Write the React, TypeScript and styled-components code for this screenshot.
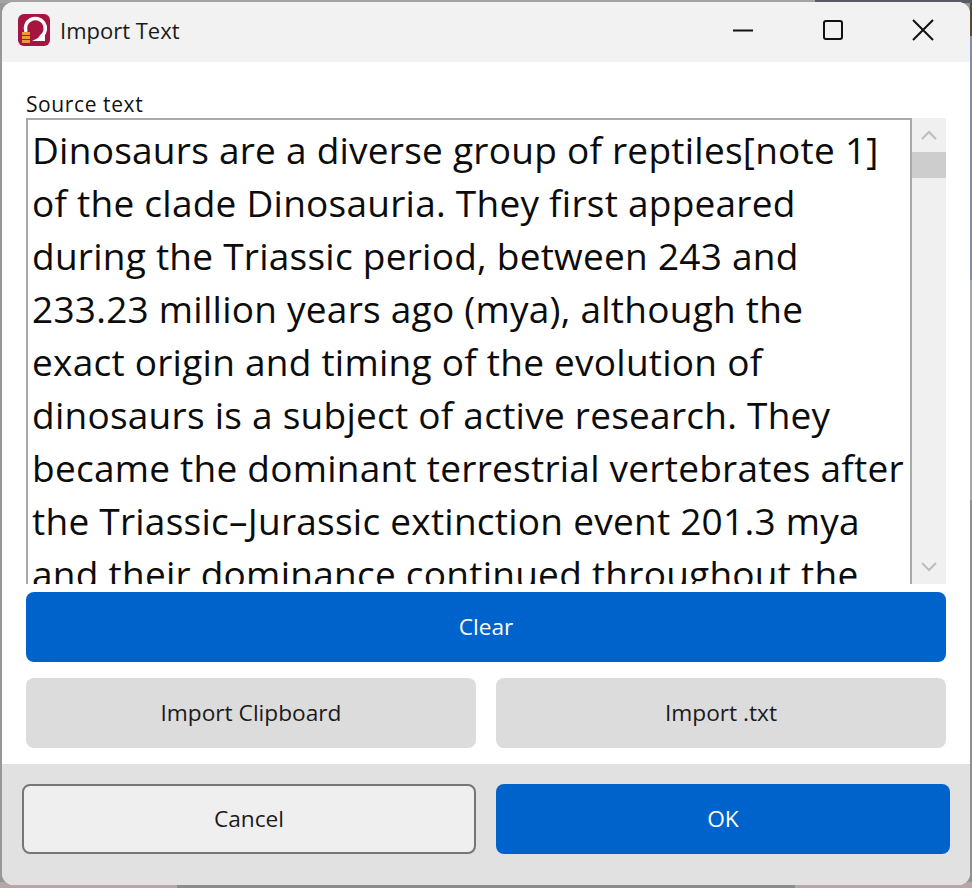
import styled, { createGlobalStyle } from 'styled-components'

const GlobalStyle = createGlobalStyle`
  html, body { margin: 0; padding: 0; height: 100%; }
  body { background: #979797; font-family: "Open Sans", "Noto Sans", sans-serif; }
  * { box-sizing: border-box; }
`

// the desktop wallpaper only shows as a thin strip round the window
const Page = styled.div`
  width: 972px;
  height: 888px;
  padding: 2px 2px 3px 2px;
  background:
    linear-gradient(90deg, #b8a6a6 0 177px, #8c8c8c 177px 795px, #b8a6a6 795px) bottom / 100% 6px no-repeat,
    linear-gradient(90deg, #a3a3a3 0 815px, #5a5a66 815px) top / 100% 3px no-repeat,
    linear-gradient(180deg, #5a4a30 0 36px, #7f8cab 36px 280px, #a8a8a8 280px 500px, #8f8f8f 500px) right / 2px 100% no-repeat;
`

const Window = styled.div`
  height: 100%;
  display: flex;
  flex-direction: column;
  border-radius: 12px;
  overflow: hidden;
  background: #fff;
`

const TitleBar = styled.div`
  height: 60px;
  flex: none;
  display: flex;
  align-items: center;
  background: #f2f2f2;
  padding: 0 0 4px 16px;
`

const AppTitle = styled.span`
  margin-left: 10px;
  font-size: 22px;
  color: #1a1a1a;
`

const WindowControls = styled.div`
  margin-left: auto;
  display: flex;
  align-items: center;
  gap: 68px;
  padding-right: 36px;
  color: #111;
`

const Content = styled.div`
  flex: 1;
  display: flex;
  flex-direction: column;
  padding: 28px 24px 16px 24px;
`

const FieldLabel = styled.label`
  font-size: 21px;
  letter-spacing: 0.6px;
  line-height: 28px;
  color: #111;
`

const Editor = styled.div`
  height: 466px;
  flex: none;
  display: flex;
`

const TextBox = styled.div`
  flex: 1;
  overflow: hidden;
  border: 2px solid #a9a9a9;
  border-bottom: none;
  padding: 3px 0 0 4px;
  background: #fff;
`

const TextLine = styled.div`
  font-size: 37px;
  letter-spacing: 0.25px;
  line-height: 53px;
  white-space: nowrap;
  color: #0c0c0c;
`

const ScrollBar = styled.div`
  width: 34px;
  flex: none;
  display: flex;
  flex-direction: column;
  align-items: center;
  background: #f0f0f0;
  color: #bdbdbd;
`

const ScrollArrow = styled.div<{ $bottom?: boolean }>`
  height: 34px;
  display: flex;
  align-items: center;
  justify-content: center;
  margin-top: ${p => (p.$bottom ? 'auto' : '0')};
`

const ScrollThumb = styled.div`
  width: 100%;
  height: 26px;
  background: #cdcdcd;
`

const Button = styled.button<{ $variant: 'primary' | 'muted' | 'outline' }>`
  height: 70px;
  width: 100%;
  min-width: 0;
  padding: 0 0 2px 0;
  border-radius: 8px;
  font-family: inherit;
  font-size: 22.7px;
  cursor: pointer;
  border: ${p => (p.$variant === 'outline' ? '2px solid #767676' : 'none')};
  background: ${p =>
    p.$variant === 'primary' ? '#0063cc' : p.$variant === 'muted' ? '#dcdcdc' : '#efefef'};
  color: ${p => (p.$variant === 'primary' ? '#fff' : '#1a1a1a')};
`

const ClearRow = styled.div`
  margin-top: 8px;
`

const ButtonRow = styled.div`
  margin-top: 16px;
  display: grid;
  grid-template-columns: 1fr 1fr;
  gap: 20px;
`

const Footer = styled.div`
  flex: none;
  height: 121px;
  background: #e1e1e1;
  padding: 20px 20px 0 20px;
  display: grid;
  grid-template-columns: 1fr 1fr;
  gap: 20px;
  align-items: start;
`

const lines = [
  'Dinosaurs are a diverse group of reptiles[note 1]',
  'of the clade Dinosauria. They first appeared',
  'during the Triassic period, between 243 and',
  '233.23 million years ago (mya), although the',
  'exact origin and timing of the evolution of',
  'dinosaurs is a subject of active research. They',
  'became the dominant terrestrial vertebrates after',
  'the Triassic–Jurassic extinction event 201.3 mya',
  'and their dominance continued throughout the',
]

const AppLogo = () => (
  <svg width="32" height="32" viewBox="0 0 32 32">
    <rect width="32" height="32" rx="6" fill="#a5153f" />
    <path d="M8 18 A10 10 0 1 1 24 22" fill="none" stroke="#fff" strokeWidth="3.5" />
    <path d="M14 27 H27 V19 L23 20 L20 24 Z" fill="#fff" />
    <rect x="4" y="18" width="8" height="3" fill="#e89a3c" />
    <rect x="4" y="22" width="8" height="3" fill="#e89a3c" />
    <rect x="4" y="26" width="8" height="3" fill="#e89a3c" />
  </svg>
)

export default function App() {
  return (
    <Page>
      <GlobalStyle />
      <Window>
        <TitleBar>
          <AppLogo />
          <AppTitle>Import Text</AppTitle>
          <WindowControls>
            <svg width="22" height="22" viewBox="0 0 22 22">
              <path d="M1 11.5H21" stroke="currentColor" strokeWidth="2" />
            </svg>
            <svg width="22" height="22" viewBox="0 0 22 22">
              <rect x="2" y="2" width="18" height="18" rx="2" fill="none" stroke="currentColor" strokeWidth="2" />
            </svg>
            <svg width="22" height="22" viewBox="0 0 22 22">
              <path d="M1 1L21 21M21 1L1 21" stroke="currentColor" strokeWidth="2" />
            </svg>
          </WindowControls>
        </TitleBar>
        <Content>
          <FieldLabel>Source text</FieldLabel>
          <Editor>
            <TextBox>
              {lines.map(line => (
                <TextLine key={line}>{line}</TextLine>
              ))}
            </TextBox>
            <ScrollBar>
              <ScrollArrow>
                <svg width="16" height="10" viewBox="0 0 16 10">
                  <path d="M1 9L8 2L15 9" fill="none" stroke="currentColor" strokeWidth="2" />
                </svg>
              </ScrollArrow>
              <ScrollThumb />
              <ScrollArrow $bottom>
                <svg width="16" height="10" viewBox="0 0 16 10">
                  <path d="M1 1L8 8L15 1" fill="none" stroke="currentColor" strokeWidth="2" />
                </svg>
              </ScrollArrow>
            </ScrollBar>
          </Editor>
          <ClearRow>
            <Button $variant="primary">Clear</Button>
          </ClearRow>
          <ButtonRow>
            <Button $variant="muted">Import Clipboard</Button>
            <Button $variant="muted">Import .txt</Button>
          </ButtonRow>
        </Content>
        <Footer>
          <Button $variant="outline">Cancel</Button>
          <Button $variant="primary">OK</Button>
        </Footer>
      </Window>
    </Page>
  )
}
